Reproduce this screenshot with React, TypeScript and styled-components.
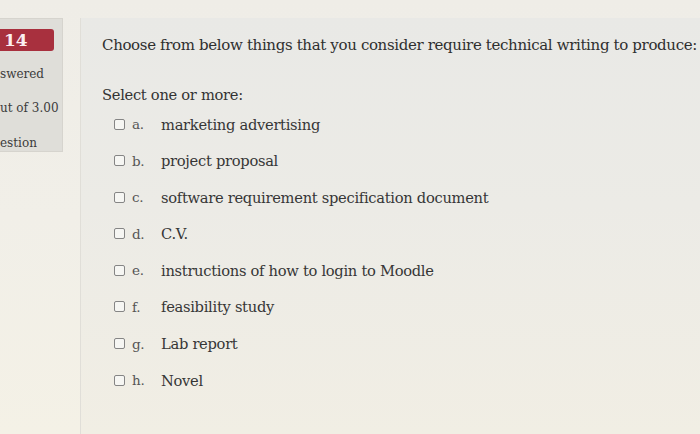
import styled, { createGlobalStyle } from 'styled-components';

const GlobalStyle = createGlobalStyle`
    html, body {
        margin: 0;
        padding: 0;
    }
    body {
        width: 700px;
        height: 434px;
        overflow: hidden;
        background: linear-gradient(180deg, #efede7 0%, #f1efe8 50%, #f4f1e6 100%);
        font-family: "DejaVu Serif", "Liberation Serif", serif;
    }
`

const PageStyle = styled.div`
    display: flex;
    align-items: flex-start;
    gap: 17px;
    padding-top: 18px;
    height: 416px;
`

const InfoPanelStyle = styled.div`
    width: 63px;
    height: 134px;
    flex-shrink: 0;
    box-sizing: border-box;
    padding-top: 10px;
    background: #dfded9;
    border: 1px solid #d6d4ce;
    border-left: none;
    display: flex;
    flex-direction: column;
`

const BadgeStyle = styled.div`
    width: 54px;
    height: 22px;
    background: #a8303e;
    color: #fbeff0;
    border-radius: 0 3px 3px 0;
    font-weight: bold;
    font-size: 17px;
    line-height: 22px;
    padding-left: 4px;
    box-sizing: border-box;
`

const InfoTextStyle = styled.div<{ $top: number }>`
    margin-top: ${props => props.$top}px;
    font-size: 12px;
    line-height: 14px;
    color: #3b3b3b;
    white-space: nowrap;
`

const QuestionPanelStyle = styled.div`
    flex: 1;
    height: 416px;
    box-sizing: border-box;
    padding: 17px 0 0 21px;
    background: linear-gradient(180deg, #e9e9e6 0%, #ecebe6 45%, #f1eee4 100%);
    border-left: 1px solid #e0ded8;
    overflow: hidden;
`

const QuestionTextStyle = styled.div`
    font-size: 15px;
    line-height: 20px;
    color: #2f2f2f;
    white-space: nowrap;
    letter-spacing: -0.35px;
`

const PromptStyle = styled.div`
    margin-top: 30px;
    font-size: 14.7px;
    line-height: 20px;
    color: #333;
    letter-spacing: -0.3px;
`

const OptionListStyle = styled.div`
    display: flex;
    flex-direction: column;
    gap: 16.6px;
    margin-top: 9px;
    padding-left: 12px;
`

const OptionRowStyle = styled.div`
    display: flex;
    align-items: center;
    height: 20px;
`

const CheckboxStyle = styled.span`
    width: 9px;
    height: 9px;
    border: 1px solid #858585;
    border-radius: 2px;
    background: #f6f6f3;
    flex-shrink: 0;
    margin-right: 7px;
`

const LetterStyle = styled.span`
    width: 29px;
    font-size: 13.5px;
    color: #555;
    letter-spacing: -0.3px;
`

const AnswerStyle = styled.span`
    font-size: 14.7px;
    color: #363636;
    letter-spacing: -0.3px;
    white-space: nowrap;
`

const options = [
    { letter: 'a.', text: 'marketing advertising' },
    { letter: 'b.', text: 'project proposal' },
    { letter: 'c.', text: 'software requirement specification document' },
    { letter: 'd.', text: 'C.V.' },
    { letter: 'e.', text: 'instructions of how to login to Moodle' },
    { letter: 'f.', text: 'feasibility study' },
    { letter: 'g.', text: 'Lab report' },
    { letter: 'h.', text: 'Novel' },
]

const App = () => {
    return (
        <>
            <GlobalStyle />
            <PageStyle>
                <InfoPanelStyle>
                    <BadgeStyle>14</BadgeStyle>
                    <InfoTextStyle $top={16}>swered</InfoTextStyle>
                    <InfoTextStyle $top={20}>ut of 3.00</InfoTextStyle>
                    <InfoTextStyle $top={21}>estion</InfoTextStyle>
                </InfoPanelStyle>

                <QuestionPanelStyle>
                    <QuestionTextStyle>
                        Choose from below things that you consider require technical writing to produce:
                    </QuestionTextStyle>
                    <PromptStyle>Select one or more:</PromptStyle>
                    <OptionListStyle>
                        {options.map(option => (
                            <OptionRowStyle key={option.letter}>
                                <CheckboxStyle />
                                <LetterStyle>{option.letter}</LetterStyle>
                                <AnswerStyle>{option.text}</AnswerStyle>
                            </OptionRowStyle>
                        ))}
                    </OptionListStyle>
                </QuestionPanelStyle>
            </PageStyle>
        </>
    )
}

export default App;
